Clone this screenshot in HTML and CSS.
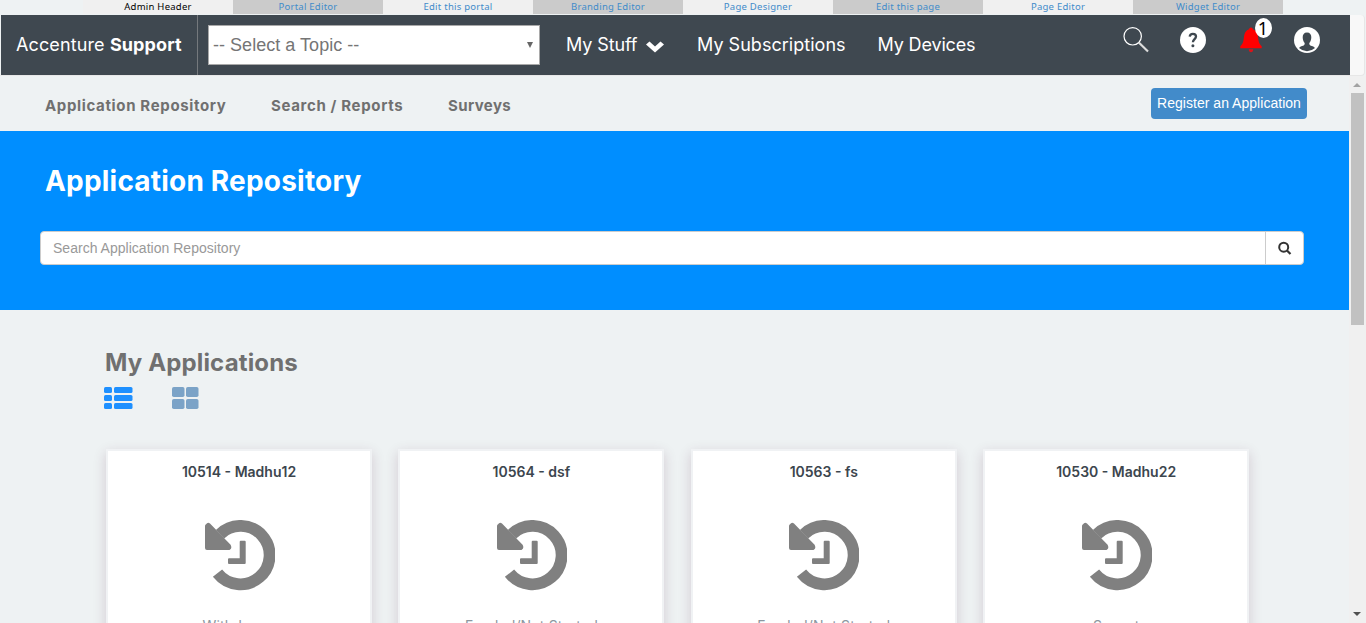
FILE: index.html
```html
<!DOCTYPE html>
<html lang="en">
<head>
<meta charset="utf-8">
<title>Application Repository</title>
<link rel="stylesheet" href="styles.css">
</head>
<body>
<svg class="defs" width="0" height="0">
  <symbol id="history" viewBox="0 0 70 71">
    <path d="M12.5 53.2A29.2 29.2 0 1 0 15 14.2" fill="none" stroke="#808080" stroke-width="11.8"/>
    <path d="M1 4.3Q2.8 1.5 5 3.6L10.8 9.4L19 18L25.6 24.8Q27.5 28.500 24.500 30H2Q0 30 0 28V6Q0 5 1 4.300Z" fill="#808080"/>
    <path d="M35.700 20.700h4q1 0 1 1V43q0 1-1 1H24q-1 0-1-1v-3.700q0-1 1-1h10.700V21.700q0-1 1-1Z" fill="#808080"/>
  </symbol>
</svg>
<div class="page">
  <div class="admin">
    <span class="current">Admin Header</span><a>Portal Editor</a><a>Edit this portal</a><a>Branding Editor</a><a>Page Designer</a><a>Edit this page</a><a>Page Editor</a><a>Widget Editor</a>
  </div>
  <header class="topbar">
    <div class="topbar-main">
      <div class="brand"><span>Accenture <b>Support</b></span></div>
      <div class="topic"><span>-- Select a Topic --</span><svg width="6" height="6"><path d="M0 0h6L3 6z" fill="#666"/></svg></div>
      <nav class="menu">
        <a class="m1">My Stuff</a>
        <svg class="chev" width="18" height="12" viewBox="0 0 18 12"><path d="M0 3.500L3.500 0.500L9 5.500L14.500 0.500L18 3.500L9 11.500Z" fill="#fff"/></svg>
        <a class="m2">My Subscriptions</a>
        <a class="m3">My Devices</a>
      </nav>
      <div class="tools">
        <svg class="t-search" width="26" height="26" viewBox="0 0 26 26"><circle cx="9.700" cy="9.300" r="8.700" fill="none" stroke="#fff" stroke-width="1.200"/><path d="M15.800 15.500L25 24.500" stroke="#ddd" stroke-width="2.200"/></svg>
        <svg class="t-help" width="26" height="26" viewBox="0 0 26 26"><circle cx="13" cy="13" r="13" fill="#fff"/><path d="M9.700 9.600C9.900 7.500 11.100 6.800 12.900 6.800C14.900 6.800 16 8 16 9.500C16 12 12.900 12.300 12.900 15.300" fill="none" stroke="#3f4850" stroke-width="2.300"/><circle cx="12.900" cy="18.700" r="1.500" fill="#3f4850"/></svg>
        <div class="bell">
          <svg width="22" height="26" viewBox="0 0 22 26"><path d="M11 0.500c1.200 0 1.700.8 1.800 1.700c3.400 1 4.700 4 5.200 7.500c.6 4.500.8 6.800 3.700 9.600v1.900H.3v-1.900c2.900-2.800 3.100-5.100 3.700-9.600c.5-3.500 1.800-6.500 5.200-7.500c.1-.9.600-1.700 1.800-1.700Z" fill="#f00"/><path d="M8.700 22.300h4.600q-.2 3-2.300 3t-2.300-3Z" fill="#d8141a"/></svg>
          <span class="badge">1</span>
        </div>
        <svg class="t-user" width="26" height="26" viewBox="0 0 26 26"><circle cx="13" cy="13" r="13" fill="#fff"/><path d="M13 5.500c-3 0-4.400 2.100-4.300 4.800c0 2.600.8 4.400 2 5.700c.2 2-.8 2.500-2.700 3.100c-1.300.4-2.300 1-3 2Q8.500 24.300 13 24.300T21 21.100c-.7-1-1.700-1.600-3-2c-1.900-.6-2.900-1.100-2.700-3.100c1.200-1.300 2-3.100 2-5.700c.1-2.700-1.300-4.800-4.300-4.800Z" fill="#3f4850"/></svg>
      </div>
    </div>
  </header>
  <div class="body">
    <main class="content">
      <div class="subnav">
        <a class="s1">Application Repository</a><a class="s2">Search / Reports</a><a class="s3">Surveys</a>
        <button class="register">Register an Application</button>
      </div>
      <section class="hero">
        <h1>Application Repository</h1>
        <div class="search">
          <span class="field">Search Application Repository</span>
          <span class="go"><svg width="14" height="14" viewBox="0 0 14 14"><circle cx="5.700" cy="6.200" r="4.500" fill="none" stroke="#333" stroke-width="2"/><path d="M9 9.500L12.500 13" stroke="#333" stroke-width="2.200"/></svg></span>
        </div>
      </section>
      <section class="apps">
        <h2>My Applications</h2>
        <div class="views">
          <svg width="29" height="22" viewBox="0 0 29 22"><g fill="#1e90ff"><rect y="0" width="8" height="6" rx="1.500"/><rect x="10" y="0" width="18.500" height="6" rx="1.500"/><rect y="8" width="8" height="6" rx="1.500"/><rect x="10" y="8" width="18.500" height="6" rx="1.500"/><rect y="16" width="8" height="6" rx="1.500"/><rect x="10" y="16" width="18.500" height="6" rx="1.500"/></g></svg>
          <svg width="27" height="22" viewBox="0 0 27 22"><g fill="#7ba3c7"><rect width="12.500" height="10" rx="1.800"/><rect x="14" width="12.500" height="10" rx="1.800"/><rect y="12" width="12.500" height="10" rx="1.800"/><rect x="14" y="12" width="12.500" height="10" rx="1.800"/></g></svg>
        </div>
        <div class="cards">
          <article class="card"><h3>10514 - Madhu12</h3><svg class="hist"><use href="#history"/></svg><p>Withdrawn</p></article>
          <article class="card"><h3>10564 - dsf</h3><svg class="hist"><use href="#history"/></svg><p>Funded/Not Started</p></article>
          <article class="card"><h3>10563 - fs</h3><svg class="hist"><use href="#history"/></svg><p>Funded/Not Started</p></article>
          <article class="card"><h3>10530 - Madhu22</h3><svg class="hist"><use href="#history"/></svg><p>Sunset</p></article>
        </div>
      </section>
    </main>
    <div class="scrollbar">
      <svg width="8" height="4"><path d="M0 4L4 0L8 4z" fill="#a3a3a3"/></svg>
      <div class="thumb"></div>
      <svg class="down" width="8" height="4"><path d="M0 0L4 4L8 0z" fill="#505050"/></svg>
    </div>
  </div>
</div>
</body>
</html>
```
FILE: styles.css
```css
* { box-sizing: border-box; }
body { margin: 0; background: #eef2f3; font-family: Inter, "Liberation Sans", sans-serif; }
svg { display: block; flex: none; }
.defs { position: absolute; }
.page { width: 1366px; height: 623px; overflow: hidden; display: flex; flex-direction: column; }

.admin { display: flex; height: 15px; padding-left: 83px; flex: none; background: #eef2f3; }
.admin > * { width: 150px; height: 14px; text-align: center; font: 9.500px/14px "Noto Sans", sans-serif; letter-spacing: .25px; color: #428bca; background: #f0f0f0; white-space: nowrap; }
.admin > :nth-child(even) { background: #cbcbcb; }
.admin > .current { color: #000; }

.topbar { height: 61px; margin-right: 1px; padding-left: 1px; flex: none; background: linear-gradient(90deg, #eef2f3 1px, #f8f8f8 1px); border-bottom: 1px solid #e7e7e7; border-right: 1px solid #e7e7e7; border-radius: 0 4px 4px 0; }
.topbar-main { display: flex; width: 1349px; height: 60px; background: #3f4850; color: #fff; }
.brand { width: 197px; padding-left: 15px; border-right: 1px solid #75797d; font-size: 18px; line-height: 60px; letter-spacing: .12px; white-space: nowrap; }
.topic { display: flex; align-items: center; justify-content: space-between; width: 332px; height: 40px; margin: 10px 0 0 10px; padding: 0 6px 0 4px; background: #fff; border: 1px solid #a9a9a9; color: #757575; font: 18px "Liberation Sans", sans-serif; letter-spacing: .03px; }
.menu { display: flex; align-items: center; width: 570px; padding-left: 26px; font-size: 18px; line-height: 60px; white-space: nowrap; }
.m1 { width: 80px; letter-spacing: -.1px; }
.chev { margin-top: 3px; }
.m2 { width: 180.500px; margin-left: 33px; letter-spacing: .03px; }
.m3 { letter-spacing: -.15px; }
.tools { display: flex; margin-top: 12px; margin-left: 12.500px; }
.t-help { margin-left: 31px; }
.bell { position: relative; margin-left: 34px; width: 22px; }
.badge { position: absolute; left: 15px; top: -9px; width: 17px; height: 20px; border-radius: 50%; background: #fff; color: #000; font: 18px/20px "Noto Sans", sans-serif; text-align: center; }
.t-user { margin-left: 32px; }

.body { display: flex; flex: 1; min-height: 0; }
.content { width: 1349px; height: 547px; overflow: hidden; }
.subnav { display: flex; height: 55px; padding-left: 45px; font-size: 15px; font-weight: 700; line-height: 59px; letter-spacing: .65px; color: #707070; white-space: nowrap; }
.s1 { width: 226px; }
.s2 { width: 177px; }
.s3 { letter-spacing: .4px; }
.register { width: 156px; height: 31px; margin: 12px 42px 0 auto; padding: 0; background: #428bca; border: 0; border-radius: 4px; color: #fff; font: 14px/31px "Liberation Sans", sans-serif; letter-spacing: .03px; }

.hero { height: 179px; padding: 32px 45px 0 40px; background: #008eff; }
.hero h1 { margin: 0 0 32px 5px; font-size: 28px; line-height: 36px; font-weight: 700; letter-spacing: .2px; color: #fff; white-space: nowrap; }
.search { display: flex; width: 1264px; height: 34px; background: #fff; border: 1px solid #ccc; border-radius: 4px; }
.field { flex: 1; padding-left: 12px; font: 14px/32px "Liberation Sans", sans-serif; letter-spacing: .02px; color: #999; }
.go { display: flex; align-items: center; justify-content: center; width: 38px; border-left: 1px solid #ccc; }

.apps { padding: 36px 99px 0 105px; }
.apps h2 { margin: 0; font-size: 24px; line-height: 34px; font-weight: 700; letter-spacing: .15px; color: #707070; white-space: nowrap; }
.views { display: flex; gap: 38.500px; margin: 7px 0 0 -.6px; }
.cards { display: grid; grid-template-columns: repeat(4, 266px); gap: 26.400px; margin: 40px 0 0 1px; }
.card { display: flex; flex-direction: column; align-items: center; height: 220px; padding-top: 10px; background: #fff; border: 2px solid #f0f2f4; box-shadow: 0 4px 12px rgba(90, 30, 70, .19); }
.card h3 { margin: 0; font-size: 14px; line-height: 21px; font-weight: 600; color: #3c464e; white-space: nowrap; }
.hist { width: 70px; height: 71px; margin: 38px 0 0 1px; }
.card p { margin: 24.500px 0 0; font-size: 14px; line-height: 20px; letter-spacing: .15px; color: #8c979f; white-space: nowrap; }

.scrollbar { display: flex; flex-direction: column; align-items: center; width: 17px; height: 547px; padding: 7px 1px 7px 0; background: #f0f0f0; }
.thumb { width: 13px; height: 232px; margin-top: 6px; background: #c1c1c1; }
.down { margin-top: auto; }
```
